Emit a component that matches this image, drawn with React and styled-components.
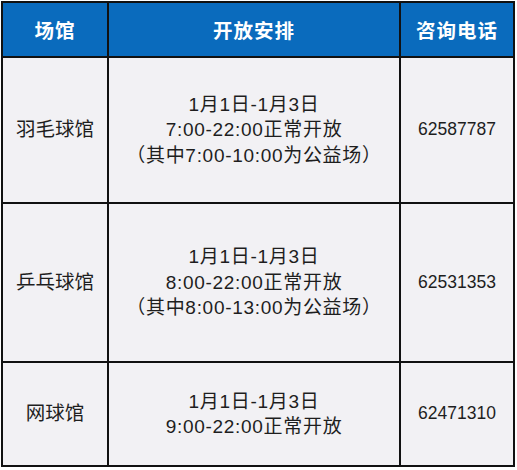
import React from "react";
import styled, { createGlobalStyle } from "styled-components";

const Global = createGlobalStyle`
  html, body { margin: 0; padding: 0; background: #ffffff; }
  body { font-family: "Liberation Sans", "Noto Sans CJK SC", sans-serif; }
`;

const Table = styled.div`
  width: 514px;
  margin: 1px 0 0 1px;
  box-sizing: border-box;
  padding: 2px;
  display: grid;
  grid-template-columns: 104px 290px 112px;
  grid-template-rows: 53px 144px 157px 102px;
  gap: 2px;
  background: #111;
`;

const HeadCell = styled.div`
  background: #0a6bbd;
  color: #ffffff;
  font-family: "Noto Sans CJK SC", sans-serif;
  font-weight: 700;
  font-size: 19.5px;
  letter-spacing: 1px;
  display: flex;
  align-items: center;
  justify-content: center;
`;

const Cell = styled.div`
  background: #f2f1f4;
  color: #1e1e1e;
  font-size: ${(p) => p.$size || 18}px;
  letter-spacing: ${(p) => p.$spacing || 0}px;
  line-height: 25.5px;
  display: flex;
  flex-direction: column;
  align-items: center;
  justify-content: center;
  text-align: center;
`;

const Line = styled.div`
  white-space: nowrap;
`;

const rows = [
  {
    name: "羽毛球馆",
    lines: ["1月1日-1月3日", "7:00-22:00正常开放", "（其中7:00-10:00为公益场）"],
    phone: "62587787",
  },
  {
    name: "乒乓球馆",
    lines: ["1月1日-1月3日", "8:00-22:00正常开放", "（其中8:00-13:00为公益场）"],
    phone: "62531353",
  },
  {
    name: "网球馆",
    lines: ["1月1日-1月3日", "9:00-22:00正常开放"],
    phone: "62471310",
  },
];

export default function App() {
  return (
    <>
      <Global />
      <Table>
        <HeadCell>场馆</HeadCell>
        <HeadCell>开放安排</HeadCell>
        <HeadCell>咨询电话</HeadCell>
        {rows.map((r) => (
          <React.Fragment key={r.name}>
            <Cell $size={19.5}>{r.name}</Cell>
            <Cell $size={19} $spacing={0.7}>
              {r.lines.map((l) => (
                <Line key={l}>{l}</Line>
              ))}
            </Cell>
            <Cell $size={17.5}>{r.phone}</Cell>
          </React.Fragment>
        ))}
      </Table>
    </>
  );
}
